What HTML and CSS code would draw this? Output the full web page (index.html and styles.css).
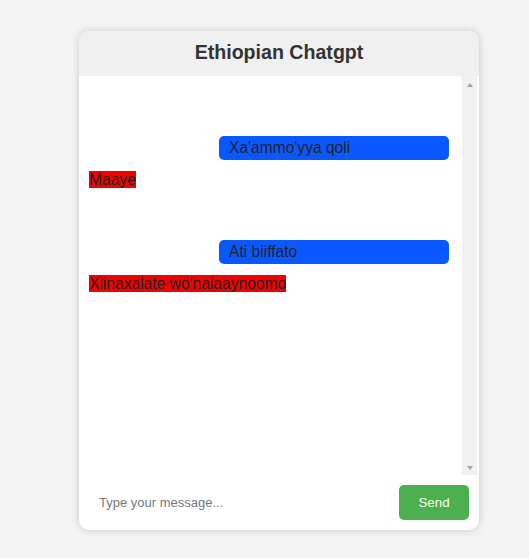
FILE: index.html
```html
<!DOCTYPE html>
<html>
<head>
<meta charset="utf-8">
<title>Ethiopian Chatgpt</title>
<link rel="stylesheet" href="styles.css">
</head>
<body>
<div class="page">
  <div class="card">
    <div class="header">Ethiopian Chatgpt</div>
    <div class="chat-row">
      <div class="chat">
        <div class="msg user">Xa'ammo'yya qoli</div>
        <div class="msg bot"><span>Maaye</span></div>
        <div class="msg user">Ati biiffato</div>
        <div class="msg bot"><span>Xiinaxalate wo'nalaaynoomo</span></div>
      </div>
      <div class="scrollbar" aria-hidden="true">
        <span class="arrow up"></span>
        <span class="arrow down"></span>
      </div>
    </div>
    <div class="input-area">
      <input class="text" type="text" placeholder="Type your message...">
      <button class="send">Send</button>
    </div>
  </div>
</div>
</body>
</html>
```

FILE: styles.css
```css
html, body {
  margin: 0;
  padding: 0;
  background: #f4f4f4;
  font-family: "Liberation Sans", Arial, sans-serif;
}
.page {
  padding: 31px 0 0 79px;
  height: 527px;
}
.card {
  width: 400px;
  background: #fff;
  border-radius: 10px;
  box-shadow: 0 0 8px rgba(0, 0, 0, 0.18);
  overflow: hidden;
}
.header {
  background: #f0f0f0;
  height: 45px;
  box-sizing: border-box;
  padding-top: 10px;
  text-align: center;
  font-size: 19.6px;
  font-weight: bold;
  color: #333;
}
.chat-row {
  display: flex;
  height: 399px;
}
.chat {
  flex: 1;
  box-sizing: border-box;
  padding: 9px 10px 10px 10px;
  overflow: hidden;
}
.scrollbar {
  width: 15px;
  margin-right: 2px;
  background: #f1f1f1;
  display: flex;
  flex-direction: column;
  justify-content: space-between;
  align-items: center;
  padding: 7px 0 5px;
  box-sizing: border-box;
}
.arrow {
  width: 0;
  height: 0;
  border-left: 3.5px solid transparent;
  border-right: 3.5px solid transparent;
}
.arrow.up {
  border-bottom: 4px solid #a3a3a3;
}
.arrow.down {
  border-top: 4px solid #a3a3a3;
}
.msg {
  font-size: 15.6px;
  color: #222;
}
.user {
  margin: 51px 0 0 130px;
  width: 230px;
  box-sizing: border-box;
  padding: 3px 10px;
  background: #0a58ff;
  border-radius: 5px;
}
.bot {
  margin-top: 11px;
}
.bot span {
  background: #f20000;
}
.input-area {
  display: flex;
  gap: 10px;
  padding: 10px;
}
.text {
  flex: 1;
  border: none;
  outline: none;
  padding: 0 10px;
  font-family: "Liberation Sans", Arial, sans-serif;
  font-size: 13px;
  color: #333;
}
.text::placeholder {
  color: #777;
}
.send {
  width: 70px;
  height: 35px;
  border: none;
  border-radius: 5px;
  background: #4caf50;
  color: #f4fff4;
  font-family: "Liberation Sans", Arial, sans-serif;
  font-size: 13.33px;
}
```
